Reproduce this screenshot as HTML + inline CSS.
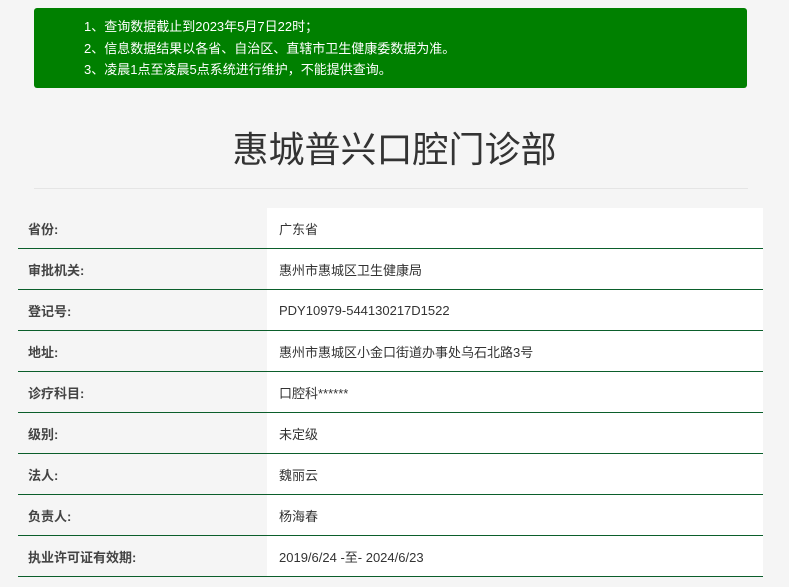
<!DOCTYPE html>
<html><head><meta charset="utf-8"><style>
body{margin:0;background:#f5f5f5;font-family:"Liberation Sans","Noto Sans CJK SC",sans-serif;color:#333;width:789px;height:587px;overflow:hidden;position:relative}
.note{position:absolute;left:34px;top:8px;width:713px;height:80px;background:#008000;border-radius:3px;box-sizing:border-box;padding:8px 0 0 50px;color:#fff;font-size:13px;line-height:21.5px}
h1{position:absolute;left:0;width:789px;top:126px;margin:0;text-align:center;font-weight:normal;font-size:36px;line-height:48px;color:#333}
.hr{position:absolute;left:34px;width:714px;top:188px;border-top:1px solid #e5e5e5}
table{position:absolute;left:18px;top:208px;width:745px;border-collapse:collapse;font-size:13px}
td{height:40px;border-bottom:1px solid #0b5e2b;padding:0;vertical-align:middle}
td.l{width:249px;background:#f5f5f5;font-weight:bold;padding-left:10px;box-sizing:border-box;color:#444}
td.v{background:#fff;padding-left:12px;color:#333}
</style></head><body>
<div class="note"><div>1、查询数据截止到2023年5月7日22时；</div><div>2、信息数据结果以各省、自治区、直辖市卫生健康委数据为准。</div><div>3、凌晨1点至凌晨5点系统进行维护，不能提供查询。</div></div>
<h1>惠城普兴口腔门诊部</h1>
<div class="hr"></div>
<table>
<tr><td class="l">省份:</td><td class="v">广东省</td></tr>
<tr><td class="l">审批机关:</td><td class="v">惠州市惠城区卫生健康局</td></tr>
<tr><td class="l">登记号:</td><td class="v">PDY10979-544130217D1522</td></tr>
<tr><td class="l">地址:</td><td class="v">惠州市惠城区小金口街道办事处乌石北路3号</td></tr>
<tr><td class="l">诊疗科目:</td><td class="v">口腔科******</td></tr>
<tr><td class="l">级别:</td><td class="v">未定级</td></tr>
<tr><td class="l">法人:</td><td class="v">魏丽云</td></tr>
<tr><td class="l">负责人:</td><td class="v">杨海春</td></tr>
<tr><td class="l">执业许可证有效期:</td><td class="v">2019/6/24 -至- 2024/6/23</td></tr>
</table>
</body></html>
